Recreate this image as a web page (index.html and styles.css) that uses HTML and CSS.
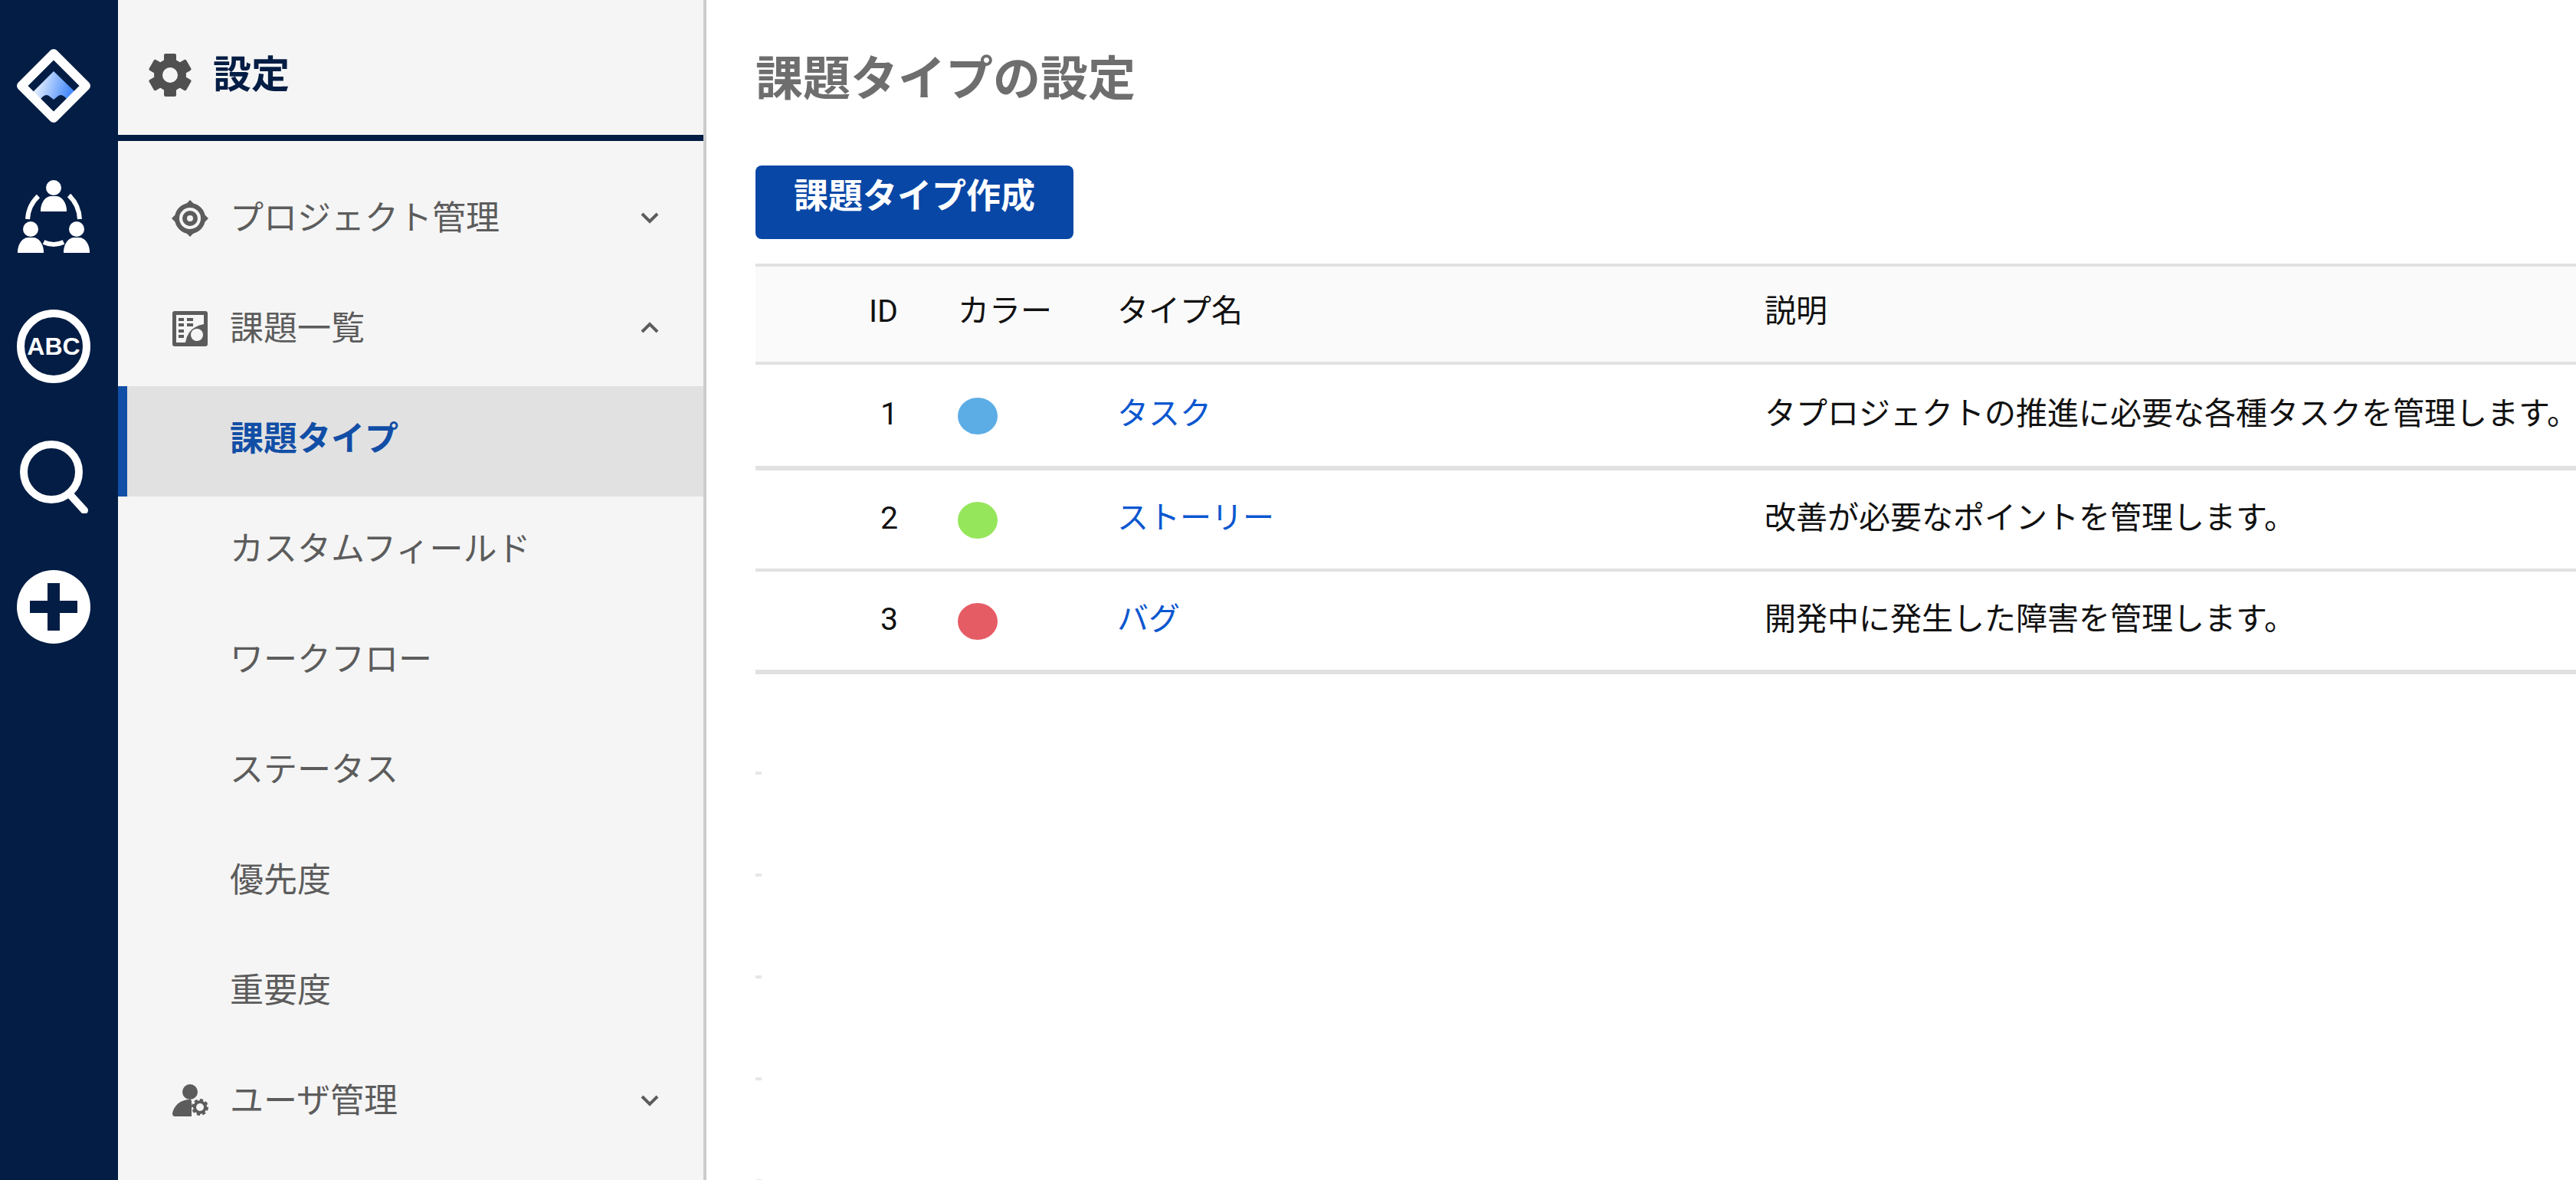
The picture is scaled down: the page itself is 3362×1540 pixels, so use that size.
FILE: index.html
```html
<!DOCTYPE html>
<html lang="ja">

<head>
    <meta charset="UTF-8">
    <meta name="viewport" content="width=device-width, initial-scale=1.0">
    <title>課題タイプの設定</title>
    <link rel="stylesheet" href="styles.css">
</head>

<body>
    <nav class="rail">
        <a href="#" aria-label="ホーム">
            <svg viewBox="0 0 96 96">
                <defs>
                    <linearGradient id="peak" x1="0" y1="0.4" x2="1" y2="0.6">
                        <stop offset="0.1" stop-color="#e2edff"/>
                        <stop offset="0.9" stop-color="#4a8dfa"/>
                    </linearGradient>
                </defs>
                <path d="M48 29 L75 55 L65 65 L62 62 Q57 58 53 62 L48 66 L43 62 Q39 58 34 62 L31 65 L21 56 Z" fill="url(#peak)"/>
                <path d="M48 6 L90 48 L48 90 L6 48 Z" fill="none" stroke="#fff" stroke-width="12" stroke-linejoin="round"/>
            </svg>
        </a>
        <a href="#" aria-label="メンバー">
            <svg viewBox="0 0 96 96" fill="#fff">
                <circle cx="48" cy="11" r="10"/>
                <path d="M31 42 v-3 c1-9 6-17 14-17 h6 c8 0 13 8 14 17 v3 z"/>
                <circle cx="18" cy="65" r="10"/>
                <path d="M1 96 v-3 c1-9 6-17 14-17 h6 c8 0 13 8 14 17 v3 z"/>
                <circle cx="78" cy="65" r="10"/>
                <path d="M61 96 v-3 c1-9 6-17 14-17 h6 c8 0 13 8 14 17 v3 z"/>
                <path d="M28 22 Q15 34 14 52 M68 21 Q81 33 82 52 M35 82 Q48 88 61 82" fill="none" stroke="#fff" stroke-width="6"/>
            </svg>
        </a>
        <a href="#" aria-label="用語">
            <svg viewBox="0 0 96 96">
                <circle cx="48" cy="48" r="43" fill="none" stroke="#fff" stroke-width="10"/>
                <text class="abc" x="48" y="59" text-anchor="middle">ABC</text>
            </svg>
        </a>
        <a href="#" aria-label="検索">
            <svg viewBox="0 0 96 96" fill="none" stroke="#fff">
                <circle cx="45" cy="42" r="36" stroke-width="10"/>
                <path d="M68 70 L88 92" stroke-width="10" stroke-linecap="round"/>
            </svg>
        </a>
        <a href="#" aria-label="追加">
            <svg viewBox="0 0 96 96">
                <circle cx="48" cy="48" r="48" fill="#fff"/>
                <path d="M40 17 h16 v23 h23 v16 h-23 v23 h-16 v-23 h-23 v-16 h23 z" fill="#031d44"/>
            </svg>
        </a>
    </nav>

    <aside class="sidebar">
        <div class="sidebar-header">
            <svg class="gear" viewBox="-28 -28 56 56" fill="#505050">
                <path fill-rule="evenodd" d="M-21 0 a21 21 0 1 0 42 0 a21 21 0 1 0 -42 0 z M-10 0 a10 10 0 1 1 20 0 a10 10 0 1 1 -20 0 z"/>
                <g id="teeth">
                    <path d="M-8 -17 V-26 Q-8 -28 -6 -28 H6 Q8 -28 8 -26 V-17 z"/>
                    <path d="M-8 17 V26 Q-8 28 -6 28 H6 Q8 28 8 26 V17 z"/>
                </g>
                <use href="#teeth" transform="rotate(60)"/>
                <use href="#teeth" transform="rotate(120)"/>
            </svg>
            <h2>設定</h2>
        </div>
        <ul class="menu">
            <li>
                <a href="#">
                    <svg class="icon" viewBox="0 0 48 48" fill="none" stroke="#5c5c5c">
                        <circle cx="24" cy="24" r="17" stroke-width="6"/>
                        <circle cx="24" cy="24" r="7" stroke-width="6"/>
                        <path d="M24 0 l10 10 h-20 z M24 48 l10 -10 h-20 z M0 24 l10 10 v-20 z M48 24 l-10 10 v-20 z" fill="#5c5c5c" stroke="none"/>
                    </svg>
                    プロジェクト管理
                    <svg class="chevron" viewBox="0 0 24 24"><path d="M2 7 L12 17 L22 7"/></svg>
                </a>
            </li>
            <li>
                <a href="#">
                    <svg class="icon" viewBox="0 0 48 48">
                        <rect x="1" y="1" width="46" height="46" rx="3" fill="#5c5c5c"/>
                        <path d="M6 6 h36 v12 Q21 22 18 42 H6 z" fill="#f5f5f5"/>
                        <path d="M9 12 h7 M20 12 h8 M9 19 h7 M20 19 h8 M9 27 h7 M9 34 h7" stroke="#5c5c5c" stroke-width="4"/>
                        <circle cx="33" cy="32" r="8" fill="#f5f5f5"/>
                    </svg>
                    課題一覧
                    <svg class="chevron" viewBox="0 0 24 24"><path d="M2 17 L12 7 L22 17"/></svg>
                </a>
                <ul>
                    <li><a class="active" href="#">課題タイプ</a></li>
                    <li><a href="#">カスタムフィールド</a></li>
                    <li><a href="#">ワークフロー</a></li>
                    <li><a href="#">ステータス</a></li>
                    <li><a href="#">優先度</a></li>
                    <li><a href="#">重要度</a></li>
                </ul>
            </li>
            <li>
                <a href="#">
                    <svg class="icon" viewBox="0 0 48 48" fill="#5c5c5c">
                        <circle cx="24" cy="12" r="10"/>
                        <path d="M1 40 C3 30 11 22 24 22 Q26 22 26 25 V44 H4 Q1 44 1 40 z"/>
                        <circle cx="37" cy="32" r="7" fill="none" stroke="#5c5c5c" stroke-width="4"/>
                        <circle cx="37" cy="32" r="9" fill="none" stroke="#5c5c5c" stroke-width="4" stroke-dasharray="4 3"/>
                    </svg>
                    ユーザ管理
                    <svg class="chevron" viewBox="0 0 24 24"><path d="M2 7 L12 17 L22 7"/></svg>
                </a>
            </li>
        </ul>
    </aside>

    <main>
        <h1>課題タイプの設定</h1>
        <button class="create" type="button">課題タイプ作成</button>

        <table>
            <thead>
                <tr>
                    <th class="id">ID</th>
                    <th class="color">カラー</th>
                    <th class="name">タイプ名</th>
                    <th>説明</th>
                </tr>
            </thead>
            <tbody>
                <tr>
                    <td class="id">1</td>
                    <td><span class="dot task"></span></td>
                    <td><a href="#">タスク</a></td>
                    <td>タプロジェクトの推進に必要な各種タスクを管理します。</td>
                </tr>
                <tr>
                    <td class="id">2</td>
                    <td><span class="dot story"></span></td>
                    <td><a href="#">ストーリー</a></td>
                    <td>改善が必要なポイントを管理します。</td>
                </tr>
                <tr>
                    <td class="id">3</td>
                    <td><span class="dot bug"></span></td>
                    <td><a href="#">バグ</a></td>
                    <td>開発中に発生した障害を管理します。</td>
                </tr>
            </tbody>
        </table>

        <!-- empty rows -->
        <div class="empty-rows">
            <div></div>
            <div></div>
            <div></div>
            <div></div>
            <div></div>
        </div>
    </main>
</body>

</html>
```
FILE: styles.css
```css
* {
    box-sizing: border-box;
}

body {
    margin: 0;
    display: flex;
    height: 100vh;
    overflow: hidden;
    background-color: #fff;
    color: #111;
    font-family: Roboto, "Noto Sans CJK JP", sans-serif;
}

a {
    text-decoration: none;
}

svg {
    display: block;
    flex-shrink: 0;
}

.rail {
    display: flex;
    flex-direction: column;
    gap: 74px;
    flex: 0 0 154px;
    padding: 64px 22px;
    background-color: #031d44;
}

.rail svg {
    width: 96px;
    height: 96px;
}

.abc {
    font-family: "Liberation Sans", sans-serif;
    font-size: 32px;
    font-weight: bold;
    fill: #fff;
}

.sidebar {
    flex: 0 0 768px;
    background-color: #f5f5f5;
    border-right: 4px solid #ccc;
}

.sidebar-header {
    display: flex;
    align-items: center;
    gap: 28px;
    height: 184px;
    padding: 20px 40px 0;
    border-bottom: 8px solid #031d44;
}

.gear {
    width: 56px;
    height: 56px;
}

.sidebar-header h2 {
    margin: 0;
    color: #031d44;
    font-size: 50px;
    line-height: 60px;
}

.menu,
.menu ul {
    list-style: none;
    margin: 0;
    padding: 0;
}

.menu {
    padding-top: 32px;
}

.menu a {
    display: flex;
    align-items: center;
    height: 144px;
    padding: 0 58px 14px 70px;
    color: #5c5c5c;
    font-size: 44px;
}

.menu ul a {
    padding-left: 146px;
}

.menu a.active {
    padding-left: 134px;
    border-left: 12px solid #114ea6;
    background-color: #e1e1e1;
    color: #114ea6;
    font-weight: bold;
}

.icon {
    width: 48px;
    height: 48px;
    margin: 8px 28px 0 0;
}

.chevron {
    width: 24px;
    height: 24px;
    margin: 6px 0 0 auto;
    fill: none;
    stroke: #5c5c5c;
    stroke-width: 4;
}

main {
    flex: 1;
    min-width: 0;
    overflow: hidden;
    padding: 64px 0 0 64px;
}

h1 {
    margin: 0 0 72px;
    color: #6e6e6e;
    font-size: 62px;
    line-height: 80px;
}

.create {
    display: block;
    height: 96px;
    margin-bottom: 32px;
    padding: 0 50px 14px;
    border: none;
    border-radius: 8px;
    background-color: #0847a6;
    color: #fff;
    font-family: inherit;
    font-size: 45px;
    font-weight: bold;
    line-height: 60px;
    cursor: pointer;
}

table {
    width: 100%;
    table-layout: fixed;
    border-spacing: 0;
    font-size: 41px;
    line-height: 60px;
    white-space: nowrap;
}

th,
td {
    height: 132px;
    padding: 0 0 4px 40px;
    border-bottom: 4px solid #e1e1e1;
    text-align: left;
    font-weight: normal;
}

th {
    padding-bottom: 8px;
    background-color: #fafafa;
    border-top: 4px solid #e1e1e1;
}

tbody tr:first-child td {
    height: 138px;
    border-bottom-width: 6px;
}

tbody tr:last-child td {
    height: 134px;
    border-bottom-width: 6px;
}

th.id,
td.id {
    width: 224px;
    padding-right: 38px;
    text-align: right;
}

.color {
    width: 208px;
}

.name {
    width: 845px;
}

td a {
    color: #0b57d0;
}

.dot {
    display: block;
    width: 52px;
    height: 48px;
    margin-top: 6px;
    border-radius: 50%;
}

.task {
    background-color: #5cade6;
}

.story {
    background-color: #96e65c;
}

.bug {
    background-color: #e65c65;
}

.empty-rows {
    display: flex;
    flex-direction: column;
    gap: 129px;
    padding-top: 127px;
}

.empty-rows div {
    width: 8px;
    height: 4px;
    background-color: #e6e6e6;
}
```
